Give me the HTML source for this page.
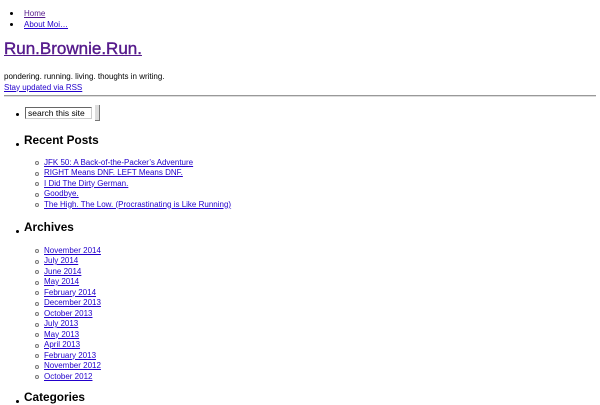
<!DOCTYPE html>
<html><head><meta charset="utf-8"><style>
*{margin:0;padding:0}
body{width:600px;height:400px;overflow:hidden;background:#fff;font-family:"Liberation Sans",sans-serif;font-size:8px;color:#000;position:relative}
a{color:#2200cc}
.v{color:#551a8b}
.t{position:absolute;white-space:nowrap;line-height:10.5px;margin-top:1px}
.b{position:absolute;width:3px;height:3px;border-radius:50%;background:#000}
.c{position:absolute;border-radius:50%;border:1px solid #777;box-sizing:border-box;width:4px;height:4px}
h1{position:absolute;left:4px;top:38px;font-size:17px;font-weight:normal;line-height:22px;-webkit-text-stroke:0.4px #551a8b}
h2{position:absolute;left:24px;font-size:11.8px;font-weight:bold;line-height:16px}
</style></head><body>
<div class="b" style="left:10px;top:12px"></div><div class="t" style="left:24px;top:8px"><a class="v" href="#">Home</a></div>
<div class="b" style="left:10px;top:23px"></div><div class="t" style="left:24px;top:18.5px"><a href="#">About Moi…</a></div>
<h1><a class="v" href="#">Run.Brownie.Run.</a></h1>
<div class="t" style="left:4px;top:71px">pondering. running. living. thoughts in writing.</div>
<div class="t" style="left:4px;top:81.5px"><a href="#">Stay updated via RSS</a></div>
<div style="position:absolute;left:4px;top:95px;width:592px;height:0;border-top:1px solid #999;border-bottom:1px solid #ddd"></div>
<div class="b" style="left:16px;top:113px"></div>
<div style="position:absolute;left:25px;top:107px;width:67px;height:12px;border:1px solid #666;border-right-color:#ccc;border-bottom-color:#ccc;box-sizing:border-box;font-size:8.5px;line-height:10px;padding-left:2px">search this site</div>
<div style="position:absolute;left:95px;top:105px;width:5px;height:16px;background:#ddd;border-right:1px solid #777;border-bottom:1px solid #777;box-sizing:border-box"></div>
<div class="b" style="left:16px;top:143px"></div><h2 style="top:132px">Recent Posts</h2>
<div class="c" style="left:35px;top:161px"></div><div class="t" style="left:44px;top:156.5px"><a href="#">JFK 50: A Back-of-the-Packer’s Adventure</a></div>
<div class="c" style="left:35px;top:171.5px"></div><div class="t" style="left:44px;top:167px"><a href="#">RIGHT Means DNF. LEFT Means DNF.</a></div>
<div class="c" style="left:35px;top:182px"></div><div class="t" style="left:44px;top:177.5px"><a href="#">I Did The Dirty German.</a></div>
<div class="c" style="left:35px;top:192.5px"></div><div class="t" style="left:44px;top:188px"><a href="#">Goodbye.</a></div>
<div class="c" style="left:35px;top:203px"></div><div class="t" style="left:44px;top:198.5px"><a href="#">The High. The Low. (Procrastinating is Like Running)</a></div>
<div class="b" style="left:16px;top:230px"></div><h2 style="top:219px">Archives</h2>
<div class="c" style="left:35px;top:249px"></div><div class="t" style="left:44px;top:244.5px"><a href="#">November 2014</a></div>
<div class="c" style="left:35px;top:259.5px"></div><div class="t" style="left:44px;top:255px"><a href="#">July 2014</a></div>
<div class="c" style="left:35px;top:270px"></div><div class="t" style="left:44px;top:265.5px"><a href="#">June 2014</a></div>
<div class="c" style="left:35px;top:280.5px"></div><div class="t" style="left:44px;top:276px"><a href="#">May 2014</a></div>
<div class="c" style="left:35px;top:291px"></div><div class="t" style="left:44px;top:286.5px"><a href="#">February 2014</a></div>
<div class="c" style="left:35px;top:301.5px"></div><div class="t" style="left:44px;top:297px"><a href="#">December 2013</a></div>
<div class="c" style="left:35px;top:312px"></div><div class="t" style="left:44px;top:307.5px"><a href="#">October 2013</a></div>
<div class="c" style="left:35px;top:322.5px"></div><div class="t" style="left:44px;top:318px"><a href="#">July 2013</a></div>
<div class="c" style="left:35px;top:333px"></div><div class="t" style="left:44px;top:328.5px"><a href="#">May 2013</a></div>
<div class="c" style="left:35px;top:343.5px"></div><div class="t" style="left:44px;top:339px"><a href="#">April 2013</a></div>
<div class="c" style="left:35px;top:354px"></div><div class="t" style="left:44px;top:349.5px"><a href="#">February 2013</a></div>
<div class="c" style="left:35px;top:364.5px"></div><div class="t" style="left:44px;top:360px"><a href="#">November 2012</a></div>
<div class="c" style="left:35px;top:375px"></div><div class="t" style="left:44px;top:370.5px"><a href="#">October 2012</a></div>
<div class="b" style="left:16px;top:400px"></div><h2 style="top:389px">Categories</h2>
</body></html>
